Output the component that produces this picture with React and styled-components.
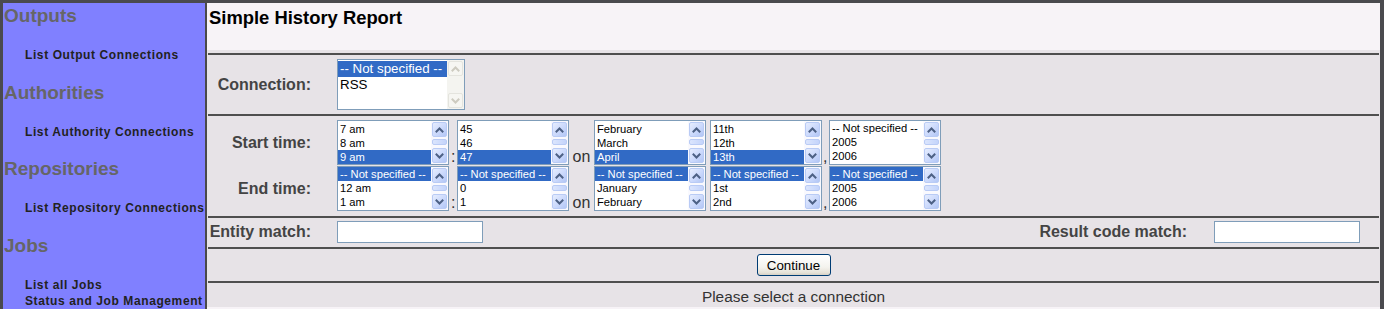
import React from 'react';
import styled, { createGlobalStyle } from 'styled-components';

const GlobalStyle = createGlobalStyle`
  html, body { margin: 0; padding: 0; }
  body {
    background: #4a4a4e;
    font-family: "Liberation Sans", Arial, sans-serif;
  }
`;

const Page = styled.div`
  display: flex;
  height: 309px;
  box-sizing: border-box;
  border-style: solid;
  border-color: #4a4a4e;
  border-width: 3px 4px 0 3px;
  overflow: hidden;
`;

const Sidebar = styled.nav`
  flex: none;
  width: 204px;
  box-sizing: border-box;
  background: #8080ff;
  border-right: 2px solid #4a4a4a;
  padding: 2px 0 0 1px;
  overflow: hidden;
`;

const NavHeading = styled.h2`
  margin: 0;
  font-size: 19px;
  line-height: 22px;
  font-weight: bold;
  color: #666;
`;

const NavList = styled.ul`
  list-style: none;
  margin: 0;
  padding: 20px 0 18.6px 21px;
`;

const NavItem = styled.li`
  font-size: 12px;
  line-height: 16px;
  font-weight: bold;
  color: #222;
  letter-spacing: 0.6px;
  white-space: nowrap;
`;

const Main = styled.main`
  flex: 1;
  min-width: 0;
  display: flex;
  flex-direction: column;
  background: #f7f3f7;
`;

const Header = styled.header`
  height: 47px;
  box-sizing: border-box;
  padding: 4px 2px 0;
`;

const Title = styled.h1`
  margin: 0;
  font-size: 18.4px;
  line-height: 22px;
  font-weight: bold;
  color: #000;
`;

const FormArea = styled.div`
  background: #e7e3e7;
  padding-top: 3px;
`;

const Divider = styled.hr`
  margin: 0 1px;
  border: 0;
  height: 2px;
  background: #4f4f4f;
`;

const GridRow = styled.div`
  display: grid;
  grid-template-columns: 104px auto;
  column-gap: 26px;
  row-gap: ${p => p.$rowGap || 0}px;
  align-items: center;
  justify-content: start;
  padding: ${p => p.$pad};
`;

const Label = styled.div`
  text-align: right;
  font-size: 16px;
  line-height: 18px;
  font-weight: bold;
  color: #444;
  white-space: nowrap;
`;

const FieldLabel = styled(Label)`
  width: ${p => p.$w || 'auto'};
`;

const BoxLine = styled.div`
  display: flex;
  align-items: flex-end;
`;

const Sep = styled.span`
  flex: none;
  width: ${p => p.$w}px;
  box-sizing: border-box;
  padding-left: ${p => p.$pl || 0}px;
  text-align: ${p => (p.$center ? 'center' : 'left')};
  font-size: 16px;
  line-height: 16px;
  color: #333;
`;

const BoxFrame = styled.div`
  flex: none;
  display: flex;
  width: ${p => p.$w}px;
  height: ${p => p.$h}px;
  box-sizing: border-box;
  border: 1px solid #7f9db9;
  background: #fff;
`;

const Options = styled.div`
  flex: 1;
  min-width: 0;
  overflow: hidden;
  display: flex;
  flex-direction: column;
  justify-content: ${p => (p.$align === 'bottom' ? 'flex-end' : 'flex-start')};
  padding-top: ${p => p.$padTop || 0}px;
`;

const Option = styled.div`
  flex: none;
  height: ${p => p.$rh}px;
  line-height: ${p => p.$rh}px;
  padding: 0 2px;
  font-size: ${p => p.$fs}px;
  white-space: nowrap;
  background: ${p => (p.$sel ? '#316ac5' : 'transparent')};
  color: ${p => (p.$sel ? '#fff' : '#000')};
`;

const ScrollBar = styled.div`
  flex: none;
  width: 17px;
  box-sizing: border-box;
  padding: 1px;
  display: flex;
  flex-direction: column;
  background: ${p => (p.$disabled ? '#f4f4f0' : '#f9f9fe')};
`;

const ScrollBtn = styled.div`
  flex: none;
  height: 15px;
  box-sizing: border-box;
  border: 1px solid ${p => (p.$disabled ? '#e4e4de' : '#b9cbf5')};
  border-radius: 2px;
  background: ${p =>
    p.$disabled
      ? '#f6f6f2'
      : 'linear-gradient(135deg, #e6edfe 0%, #cbd9fc 55%, #b2c6f5 100%)'};
  display: flex;
  align-items: center;
  justify-content: center;
`;

const Thumb = styled.div`
  flex: none;
  height: 6px;
  margin-top: 2px;
  box-sizing: border-box;
  border: 1px solid #b9cbf5;
  border-radius: 2px;
  background: linear-gradient(90deg, #dbe5fd, #c4d4fb);
`;

const ScrollSpacer = styled.div`
  flex: 1;
`;

const TextInput = styled.input`
  flex: none;
  width: 146px;
  height: 22px;
  box-sizing: border-box;
  border: 1px solid #7f9db9;
  background: #fff;
  margin: 0 ${p => p.$mr || 0}px 0 ${p => p.$ml || 0}px;
  padding: 1px 3px;
  font: 13px "Liberation Sans", Arial, sans-serif;
  outline: none;
`;

const FlexRow = styled.div`
  display: flex;
  align-items: center;
  justify-content: ${p => p.$justify || 'flex-start'};
  padding: ${p => p.$pad};
`;

const RowSpacer = styled.div`
  flex: 1;
`;

const XPButton = styled.button`
  width: 74px;
  height: 22px;
  box-sizing: border-box;
  border: 1px solid #003c74;
  border-radius: 3px;
  background: linear-gradient(180deg, #ffffff 0%, #f4f3ee 60%, #e6e2d8 88%, #d6d0c5 100%);
  font: 13.33px "Liberation Sans", Arial, sans-serif;
  color: #000;
  padding: 0;
`;

const Message = styled.div`
  height: 24px;
  box-sizing: border-box;
  padding-top: 5px;
  text-align: center;
  font-size: 15.4px;
  line-height: 18px;
  color: #333;
`;

function Chevron({ dir, disabled }) {
  const pts = dir === 'up' ? '1.5,5.5 4.5,2.5 7.5,5.5' : '1.5,2.5 4.5,5.5 7.5,2.5';
  return (
    <svg width="9" height="8" viewBox="0 0 9 8">
      <polyline
        points={pts}
        fill="none"
        stroke={disabled ? '#cdcbc0' : '#4d6185'}
        strokeWidth="2"
        strokeLinecap="square"
      />
    </svg>
  );
}

function ListBox({
  items,
  selected = -1,
  width = 112,
  height = 45,
  rowHeight = 14,
  fontSize = 11.2,
  align = 'top',
  padTop = 0,
  disabled = false,
}) {
  return (
    <BoxFrame $w={width} $h={height}>
      <Options $align={align} $padTop={padTop}>
        {items.map((it, i) => (
          <Option key={i} $rh={rowHeight} $fs={fontSize} $sel={i === selected}>
            {it}
          </Option>
        ))}
      </Options>
      <ScrollBar $disabled={disabled}>
        <ScrollBtn $disabled={disabled}>
          <Chevron dir="up" disabled={disabled} />
        </ScrollBtn>
        {!disabled && <Thumb />}
        <ScrollSpacer />
        <ScrollBtn $disabled={disabled}>
          <Chevron dir="down" disabled={disabled} />
        </ScrollBtn>
      </ScrollBar>
    </BoxFrame>
  );
}

const NS = '-- Not specified --';

const nav = [
  { title: 'Outputs', items: ['List Output Connections'] },
  { title: 'Authorities', items: ['List Authority Connections'] },
  { title: 'Repositories', items: ['List Repository Connections'] },
  { title: 'Jobs', items: ['List all Jobs', 'Status and Job Management'] },
];

function DateTimeLine({ boxes }) {
  const [hour, minute, month, day, year] = boxes;
  return (
    <BoxLine>
      <ListBox {...hour} />
      <Sep $w={8} $pl={2}>:</Sep>
      <ListBox {...minute} />
      <Sep $w={25} $center>on</Sep>
      <ListBox {...month} />
      <Sep $w={4} />
      <ListBox {...day} />
      <Sep $w={7} $pl={1}>,</Sep>
      <ListBox {...year} />
    </BoxLine>
  );
}

const startBoxes = [
  { items: ['7 am', '8 am', '9 am'], selected: 2, align: 'bottom' },
  { items: ['45', '46', '47'], selected: 2, align: 'bottom' },
  { items: ['February', 'March', 'April'], selected: 2, align: 'bottom' },
  { items: ['11th', '12th', '13th'], selected: 2, align: 'bottom' },
  { items: [NS, '2005', '2006'], selected: -1, align: 'top' },
];

const endBoxes = [
  { items: [NS, '12 am', '1 am'], selected: 0 },
  { items: [NS, '0', '1'], selected: 0 },
  { items: [NS, 'January', 'February'], selected: 0 },
  { items: [NS, '1st', '2nd'], selected: 0 },
  { items: [NS, '2005', '2006'], selected: 0 },
];

export default function App() {
  return (
    <>
      <GlobalStyle />
      <Page>
        <Sidebar>
          {nav.map(sec => (
            <section key={sec.title}>
              <NavHeading>{sec.title}</NavHeading>
              <NavList>
                {sec.items.map(it => (
                  <NavItem key={it}>{it}</NavItem>
                ))}
              </NavList>
            </section>
          ))}
        </Sidebar>
        <Main>
          <Header>
            <Title>Simple History Report</Title>
          </Header>
          <FormArea>
            <Divider />
            <GridRow $pad="4px 0">
              <Label>Connection:</Label>
              <ListBox
                items={[NS, 'RSS']}
                selected={0}
                width={128}
                height={51}
                rowHeight={16}
                fontSize={13.33}
                padTop={1}
                disabled
              />
            </GridRow>
            <Divider />
            <GridRow $pad="4px 0 5px" $rowGap={1}>
              <Label>Start time:</Label>
              <DateTimeLine boxes={startBoxes} />
              <Label>End time:</Label>
              <DateTimeLine boxes={endBoxes} />
            </GridRow>
            <Divider />
            <FlexRow $pad="3px 0 4px">
              <FieldLabel $w="104px">Entity match:</FieldLabel>
              <TextInput $ml={26} />
              <RowSpacer />
              <FieldLabel>Result code match:</FieldLabel>
              <TextInput $ml={27} $mr={20} />
            </FlexRow>
            <Divider />
            <FlexRow $pad="5px 0" $justify="center">
              <XPButton>Continue</XPButton>
            </FlexRow>
            <Divider />
            <Message>Please select a connection</Message>
          </FormArea>
        </Main>
      </Page>
    </>
  );
}
